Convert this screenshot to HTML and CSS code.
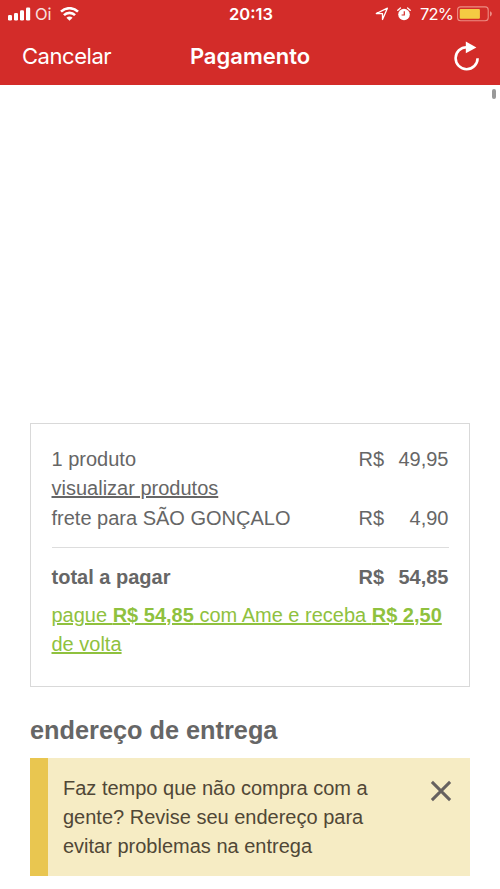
FILE: index.html
```html
<!DOCTYPE html>
<html lang="pt-BR">
<head>
<meta charset="utf-8">
<meta name="viewport" content="width=device-width, initial-scale=1">
<title>Pagamento</title>
<link rel="stylesheet" href="styles.css">
</head>
<body>
<header class="header">
  <div class="status">
    <div class="status-left">
      <svg class="signal" width="23" height="14" viewBox="0 0 23 14" fill="#fff"><rect x="0" y="8" width="4" height="5.5" rx="1.2"/><rect x="6" y="6" width="4" height="7.5" rx="1.2"/><rect x="12" y="3.3" width="4" height="10.2" rx="1.2"/><rect x="18" y="0.5" width="4.2" height="13" rx="1.2"/></svg>
      <span class="carrier">Oi</span>
      <svg class="wifi" width="19" height="14" viewBox="0.4 0 19.2 14" fill="none" stroke="#fff" stroke-width="2.6"><path d="M1.4 4.6a12.4 12.4 0 0 1 17.2 0"/><path d="M4.4 8.2a7.9 7.9 0 0 1 11.2 0"/><path d="M6.9 10.8a4.4 4.4 0 0 1 6.2 0L10 13.9z" fill="#fff" stroke="none"/></svg>
    </div>
    <span class="time">20:13</span>
    <div class="status-right">
      <svg class="location" width="14" height="14" viewBox="0 0 14 14" fill="none" stroke="#fff" stroke-width="1.3" stroke-linejoin="round"><path d="M12.4 1.2 7.5 12.5V6.7L1.3 6.5z"/></svg>
      <svg class="alarm" width="14" height="14" viewBox="0 0 14 14"><circle cx="7" cy="7.5" r="5.8" fill="#fff"/><path d="M.8 3.3 3.4 1M13.2 3.3 10.6 1" stroke="#fff" stroke-width="1.3" stroke-linecap="round"/><path d="M7.3 4.2V8H4.6" fill="none" stroke="#d32c29" stroke-width="1.2"/></svg>
      <span class="percent">72%</span>
      <svg class="battery" width="36" height="16" viewBox="0 0 36 16"><rect x=".6" y=".9" width="30.6" height="13.8" rx="3" fill="none" stroke="#ed8d84" stroke-width="1.1"/><rect x="2.7" y="2.9" width="20.2" height="9.9" rx="1" fill="#f4cb43"/><path d="M33 5.3c2.5.7 2.5 4.4 0 5.1z" fill="#ed8d84"/></svg>
    </div>
  </div>
  <nav class="nav">
    <span class="cancel">Cancelar</span>
    <h1 class="title">Pagamento</h1>
    <svg class="reload" width="27" height="31" viewBox="0 0 27 31"><path d="M13.8 6.2A11 11 0 1 0 24.6 17.2" fill="none" stroke="#fff" stroke-width="2.6"/><path d="M12.8.4 23.4 6.4l-10.6 5.8z" fill="#fff"/></svg>
  </nav>
</header>
<i class="scrollbar"></i>
<main class="content">
  <section class="summary">
    <div class="row"><span>1 produto</span><span class="price"><span>R$</span><span>49,95</span></span></div>
    <div class="row"><span class="link">visualizar produtos</span></div>
    <div class="row"><span>frete para SÃO GONÇALO</span><span class="price"><span>R$</span><span>4,90</span></span></div>
    <div class="row total"><span>total a pagar</span><span class="price"><span>R$</span><span>54,85</span></span></div>
    <p class="cashback">pague <b>R$ 54,85</b> com Ame e receba <b>R$ 2,50</b><br>de volta</p>
  </section>
  <h2 class="heading">endereço de entrega</h2>
  <section class="notice">
    <p class="notice-text">Faz tempo que não compra com a<br>gente? Revise seu endereço para<br>evitar problemas na entrega</p>
    <svg class="close" width="22" height="22" viewBox="0 0 22 22" fill="none" stroke="#66615f" stroke-width="3"><path d="M1.9 1.9 20.1 20.1M20.1 1.9 1.9 20.1"/></svg>
  </section>
</main>
</body>
</html>
```
FILE: styles.css
```css
* { box-sizing: border-box; margin: 0; padding: 0; }
body {
  position: relative;
  height: 889px;
  overflow: hidden;
  background: #fff;
  color: #666;
  font: 20px/29.33px "Liberation Sans", Arial, sans-serif;
  white-space: nowrap;
}
svg { display: block; flex: none; }
.header {
  height: 85px;
  background: #d32c29;
  color: #fff;
  font-family: Inter, sans-serif;
}
.status, .nav {
  display: grid;
  grid-template-columns: 1fr auto 1fr;
  align-items: center;
}
.status { height: 28px; padding: 0 7px 0 8px; font-size: 16.5px; line-height: 28px; }
.status-left, .status-right { display: flex; align-items: center; }
.status-right { justify-content: flex-end; }
.carrier { margin: 0 8px 0 4px; opacity: .85; }
.time { padding-left: 1px; font-weight: 600; }
.location { margin-right: 8px; }
.alarm { margin-right: 9px; }
.percent { margin-right: 4px; font-size: 16.5px; letter-spacing: -0.9px; }
.nav { height: 57px; padding: 0 20px; font-size: 22px; line-height: 57px; }
.cancel { padding-left: 2px; letter-spacing: -0.45px; }
.title { font-size: 22px; font-weight: 600; }
.reload { justify-self: end; }
.scrollbar {
  position: absolute;
  top: 89px;
  right: 4px;
  width: 4px;
  height: 10px;
  border-radius: 2px;
  background: #999;
}
.content { padding: 338px 30px 0; }
.summary {
  height: 264px;
  padding: 21px 20.5px 0;
  border: 1px solid #d9d9d9;
}
.row { display: flex; justify-content: space-between; }
.price { display: flex; justify-content: space-between; width: 90px; }
.link, .cashback { text-decoration: underline; }
.total {
  margin-top: 14px;
  padding-top: 15.5px;
  border-top: 1px solid #ddd;
  font-weight: 700;
}
.cashback { margin-top: 8px; color: #8fc13e; }
.heading { margin-top: 28px; font-size: 25.3px; line-height: 30px; }
.notice {
  display: flex;
  justify-content: space-between;
  height: 117.5px;
  margin-top: 13px;
  padding: 15.5px 18px 0 15px;
  border-left: 18px solid #e9c650;
  background: #f6ecc4;
  color: #504736;
}
.close { margin-top: 6px; }
```
